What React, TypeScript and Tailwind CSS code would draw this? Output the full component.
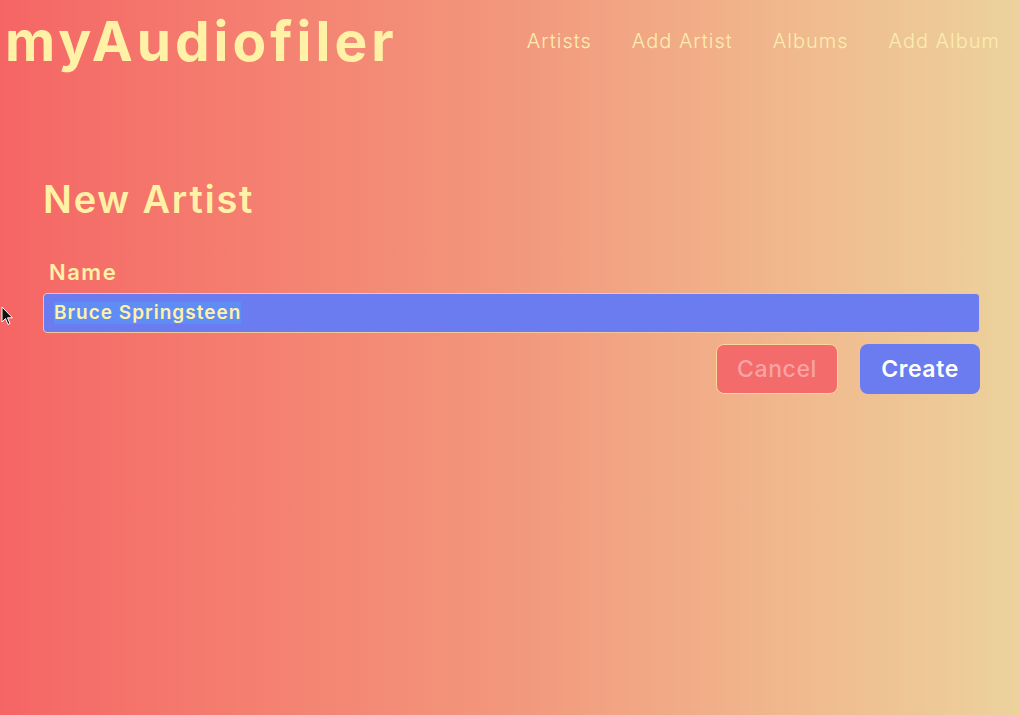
import React from "react";

const font = { fontFamily: '"Inter", "Noto Sans", sans-serif' };

export default function App() {
  return (
    <div
      className="relative w-[1020px] h-[715px] overflow-hidden bg-gradient-to-r from-[#f56565] via-[#f2977c] to-[#ecd29c] text-[#fff2a6]"
      style={font}
    >
      {/* header */}
      <div className="flex items-center justify-between pl-[5px] pr-[20px] pt-[6px]">
        <h1 className="text-[55px] font-bold leading-[70px] tracking-[4px]">myAudiofiler</h1>
        <nav className="flex gap-[40px] text-[20px] font-light text-[#fbeeb0] tracking-[1px]">
          <a>Artists</a>
          <a>Add Artist</a>
          <a>Albums</a>
          <a>Add Album</a>
        </nav>
      </div>

      {/* form */}
      <div className="px-[43px] pt-[100px] pr-[40px]">
        <h2 className="text-[38px] font-semibold leading-[46px] tracking-[1.8px]">New Artist</h2>
        <label className="block mt-[36px] ml-[6px] text-[22px] font-semibold leading-[28px] tracking-[1.5px]">Name</label>
        <div className="mt-[7px] h-[40px] rounded-[4px] border border-[#f3c79a] bg-[#6b7cf1] flex items-center px-[10px]">
          <span className="bg-[#5e8df6] text-[19px] font-semibold leading-[22px] tracking-[1px] text-[#fff2a6]">Bruce Springsteen</span>
        </div>
        <div className="flex justify-end gap-[22px] mt-[11px]">
          <button className="w-[122px] h-[50px] rounded-[8px] border border-[#f8d79c] bg-[#f36b6b] text-[23px] font-medium tracking-[0.6px] text-[#f9a3a3]">
            Cancel
          </button>
          <button className="w-[120px] h-[50px] rounded-[8px] bg-[#6b7cf1] text-[23px] font-semibold tracking-[0.6px] text-white">
            Create
          </button>
        </div>
      </div>

      {/* mouse cursor */}
      <svg className="absolute left-[1px] top-[306px]" width="14" height="20" viewBox="0 0 14 20">
        <path d="M1 1 L1 16 L4.5 12.5 L7 18.5 L9 17.5 L6.5 11.8 L11.5 11.8 Z" fill="#111" stroke="#fff" strokeWidth="1" />
      </svg>
    </div>
  );
}
